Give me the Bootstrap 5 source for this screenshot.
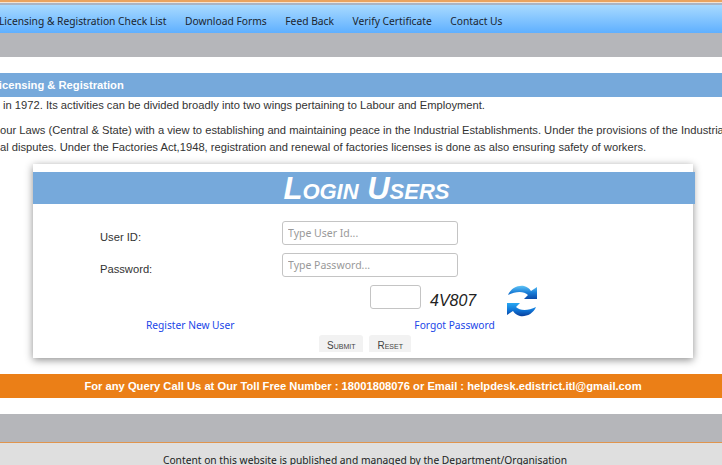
<!DOCTYPE html>
<html lang="en">
<head>
<meta charset="UTF-8">
<meta name="viewport" content="width=device-width, initial-scale=1.0">
<title>Login Users</title>
<link rel="stylesheet" href="https://cdn.jsdelivr.net/npm/bootstrap@5.3.0/dist/css/bootstrap.min.css">
<style>
    html, body { height: 465px; overflow: hidden; }
    body { font-family: "Liberation Sans", Arial, sans-serif; font-size: 11.2px; color: #333; background: #fff; }
    .top-strip { height: 5px; background: linear-gradient(#e9a35f 0 2px, #f3e3d3 2px 3px, #a9b4c4 3px); }
    .menu-bar { height: 28px; padding-top: 5px; background: linear-gradient(#a8daff, #5fb0ff); font-family: "Noto Sans", sans-serif; font-size: 10.25px; color: #1a2530; margin-left: -1px; gap: 18.6px; white-space: nowrap; }
    .gray-band { height: 24px; background: #b5b6ba; }
    .gap-top { margin-top: 16px; }
    .section-head { height: 24px; line-height: 24px; background: #76a9db; color: #fff; font-weight: 700; white-space: nowrap; text-indent: -8px; }
    .intro-text { white-space: nowrap; line-height: 17px; }
    .intro-text p { margin: 0; }
    .line-one { height: 25px; padding-left: 3px; }
    .login-box { width: 660px; height: 194px; margin: 8px 0 0 33px; background: #fff; box-shadow: 0 2px 8px rgba(0,0,0,.45); padding-top: 8px; }
    .login-title { width: 662px; height: 32px; line-height: 33px; padding-left: 5px; background: #76a9db; color: #fff; text-align: center; font-weight: 700; font-style: italic; font-variant: small-caps; font-size: 31px; }
    .form-line { height: 32px; padding-left: 67px; }
    .first-line { margin-top: 17px; }
    .form-line label { width: 182px; margin-top: 8px; color: #333; }
    .text-field { width: 176px; height: 24px; border: 1px solid #c4c4c4; border-radius: 3px; padding: 0 5px; font-family: "Noto Sans", sans-serif; font-size: 10.5px; outline: 0; }
    .text-field::placeholder { color: #999; }
    .captcha-field { width: 51px; height: 24px; border: 1px solid #c4c4c4; border-radius: 3px; margin-left: 337px; }
    .captcha-code { font-style: italic; font-size: 16px; color: #222; margin-left: 9px; margin-top: 4px; width: 77px; }
    .link-line { font-family: "Noto Sans", sans-serif; font-size: 10.2px; padding-left: 113px; margin-top: 1px; height: 17px; }
    .link-line a { color: #2146e8; text-decoration: none; }
    .link-line a + a { margin-left: 180px; }
    .btn-line { gap: 6px; padding-left: 286px; }
    .soft-btn { height: 17px; padding: 4px 8px 0; background: #f2f2f2; border-radius: 3px 3px 0 0; font-variant: small-caps; font-size: 10px; line-height: 14px; color: #444; }
    .query-bar { height: 24px; margin-top: 16px; padding-left: 4px; background: #eb7f17; color: #fff; font-weight: 700; }
    .footer-band { height: 29px; margin-top: 16px; background: #b5b6ba; border-bottom: 1px solid #e0954e; }
    .footer-note { height: 30px; background: #dfdfdf; font-family: "Noto Sans", sans-serif; font-size: 10.25px; color: #222; padding: 10px 0 0 8px; }
</style>
</head>
<body>
    <div class="top-strip"></div>
    <div class="menu-bar d-flex align-items-center">
        <span>Licensing &amp; Registration Check List</span>
        <span>Download Forms</span>
        <span>Feed Back</span>
        <span>Verify Certificate</span>
        <span>Contact Us</span>
    </div>
    <div class="gray-band"></div>

    <div class="section-head gap-top">Licensing &amp; Registration</div>
    <div class="intro-text">
        <p class="line-one">in 1972. Its activities can be divided broadly into two wings pertaining to Labour and Employment.</p>
        <p>our Laws (Central &amp; State) with a view to establishing and maintaining peace in the Industrial Establishments. Under the provisions of the Industrial</p>
        <p>al disputes. Under the Factories Act,1948, registration and renewal of factories licenses is done as also ensuring safety of workers.</p>
    </div>

    <div class="login-box">
        <div class="login-title">Login Users</div>
        <div class="form-line first-line d-flex">
            <label for="user-id">User ID:</label>
            <input id="user-id" class="text-field" type="text" placeholder="Type User Id...">
        </div>
        <div class="form-line d-flex">
            <label for="user-pass">Password:</label>
            <input id="user-pass" class="text-field" type="text" placeholder="Type Password...">
        </div>
        <div class="d-flex">
            <input class="captcha-field" type="text" aria-label="Captcha">
            <span class="captcha-code">4V807</span>
            <svg width="30" height="32" viewBox="0 0 30 32">
                <defs>
                    <linearGradient id="arrowTop" x1="0" y1="0" x2="0" y2="1">
                        <stop offset="0" stop-color="#5fc3f5"/>
                        <stop offset=".5" stop-color="#1b7fd8"/>
                        <stop offset="1" stop-color="#0b4aa8"/>
                    </linearGradient>
                    <linearGradient id="arrowLow" x1="0" y1="0" x2="0" y2="1">
                        <stop offset="0" stop-color="#28a8f2"/>
                        <stop offset=".55" stop-color="#0f74d6"/>
                        <stop offset="1" stop-color="#0a3f9c"/>
                    </linearGradient>
                </defs>
                <path fill="url(#arrowTop)" d="M1 10C4 3 11 0 17 1c3 1 5 2 7 5l6-4v12H17l4-4C17 6 9 6 1 10Z"/>
                <path fill="url(#arrowLow)" d="M29 22C26 29 19 32 13 31c-3-1-5-2-7-5l-6 4V18h13l-4 4c4 4 12 4 20 0Z"/>
            </svg>
        </div>
        <div class="link-line d-flex">
            <a href="#">Register New User</a>
            <a href="#">Forgot Password</a>
        </div>
        <div class="btn-line d-flex">
            <span class="soft-btn">Submit</span>
            <span class="soft-btn">Reset</span>
        </div>
    </div>

    <div class="query-bar d-flex align-items-center justify-content-center">For any Query Call Us at Our Toll Free Number : 18001808076 or Email : helpdesk.edistrict.itl@gmail.com</div>
    <div class="footer-band"></div>
    <div class="footer-note text-center">Content on this website is published and managed by the Department/Organisation</div>
</body>
</html>
